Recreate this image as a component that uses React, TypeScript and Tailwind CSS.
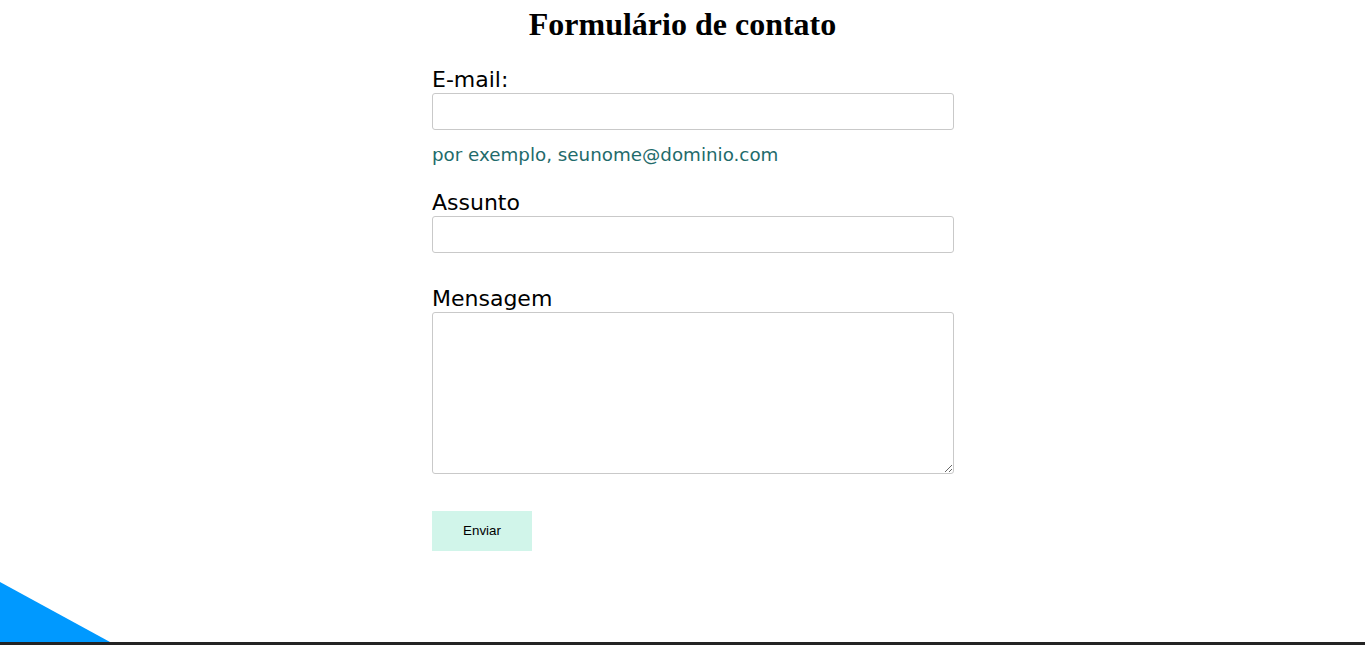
import React from 'react';

const labelCls = "block text-[22px] leading-[26px] text-black font-['DejaVu_Sans',Verdana,sans-serif]";
const fieldCls = 'block w-full border border-[#c9c9c9] rounded-[3px] bg-white outline-none';

export default function App() {
  return (
    <div className="min-h-screen bg-white pt-[6px]">
      <h1 className="text-center text-[32px] leading-[37px] font-bold text-black font-['Liberation_Serif','Times_New_Roman',serif]">
        Formulário de contato
      </h1>

      <form className="w-[522px] ml-[432px] mt-[24px]" onSubmit={(e) => e.preventDefault()}>
        <label htmlFor="email" className={labelCls}>E-mail:</label>
        <input id="email" type="email" className={`${fieldCls} h-[37px]`} />
        <p className="mt-[14px] text-[18.3px] leading-[21px] text-[#1f6b6b] font-['DejaVu_Sans',Verdana,sans-serif]">
          por exemplo, seunome@dominio.com
        </p>

        <label htmlFor="assunto" className={`${labelCls} mt-[25px]`}>Assunto</label>
        <input id="assunto" type="text" className={`${fieldCls} h-[37px]`} />

        <label htmlFor="mensagem" className={`${labelCls} mt-[33px]`}>Mensagem</label>
        <textarea id="mensagem" className={`${fieldCls} h-[162px]`} />

        <button
          type="submit"
          className="mt-[37px] block w-[100px] h-[40px] bg-[#d1f5ea] text-black text-[13.33px] font-['Liberation_Sans',Arial,sans-serif]"
        >
          Enviar
        </button>
      </form>

      <div className="mt-[31px]">
        <svg width="110" height="60" viewBox="0 0 110 60" className="block">
          <polygon points="0,0 110,60 0,60" fill="#0099ff" />
        </svg>
      </div>
      <footer className="h-[60px] bg-[#232323]" />
    </div>
  );
}
